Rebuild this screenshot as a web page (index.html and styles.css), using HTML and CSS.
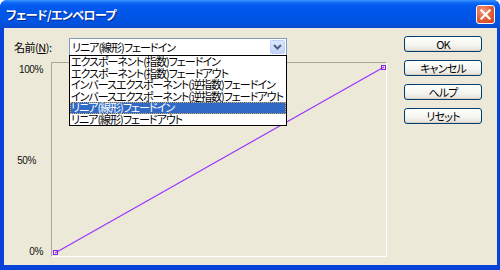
FILE: index.html
```html
<!DOCTYPE html>
<html lang="ja">
<head>
    <meta charset="UTF-8">
    <title>フェード/エンベロープ</title>
    <link rel="stylesheet" href="styles.css">
</head>
<body>
    <div class="window">
        <div class="titlebar">
            <span class="title">フェード/エンベロープ</span>
            <div class="close-btn">
                <svg width="17" height="17" viewBox="0 0 17 17">
                    <path d="M4.5 4.5 L12.5 12.5 M12.5 4.5 L4.5 12.5" stroke="#fff" stroke-width="2.2" stroke-linecap="square"/>
                </svg>
            </div>
        </div>

        <div class="client">
            <div class="main">
                <div class="name-row">
                    <span class="name-label">名前(<u>N</u>):</span>
                    <div class="combo">
                        <span class="combo-text">リニア(線形)フェードイン</span>
                        <span class="combo-arrow">
                            <svg width="9" height="6" viewBox="0 0 9 6">
                                <path d="M1 1 L4.5 4.5 L8 1" fill="none" stroke="#4d6185" stroke-width="2"/>
                            </svg>
                        </span>
                        <ul class="combo-list">
                            <li>エクスポーネント(指数)フェードイン</li>
                            <li>エクスポーネント(指数)フェードアウト</li>
                            <li>インバースエクスポーネント(逆指数)フェードイン</li>
                            <li>インバースエクスポーネント(逆指数)フェードアウト</li>
                            <li class="selected">リニア(線形)フェードイン</li>
                            <li>リニア(線形)フェードアウト</li>
                        </ul>
                    </div>
                </div>

                <div class="chart">
                    <div class="axis">
                        <span>100%</span>
                        <span class="mid">50%</span>
                        <span>0%</span>
                    </div>
                    <div class="plot">
                        <svg width="334" height="193" viewBox="0 0 334 193">
                            <line x1="3" y1="190" x2="332" y2="4" stroke="#9933ff" stroke-width="1.2"/>
                            <rect x="1.5" y="187.5" width="4" height="4" fill="none" stroke="#8a22ee"/>
                            <rect x="329.5" y="2.5" width="4" height="4" fill="none" stroke="#8a22ee"/>
                        </svg>
                    </div>
                </div>
            </div>

            <div class="buttons">
                <div class="btn">OK</div>
                <div class="btn">キャンセル</div>
                <div class="btn">ヘルプ</div>
                <div class="btn">リセット</div>
            </div>
        </div>
    </div>
</body>
</html>
```

FILE: styles.css
```css
* {
    margin: 0;
    padding: 0;
    box-sizing: border-box;
}

body {
    font-family: "Noto Sans CJK JP", "Liberation Sans", sans-serif;
    font-size: 11px;
    font-feature-settings: "palt";
    color: #000;
    background: #fff;
}

.window {
    width: 500px;
    height: 270px;
    display: flex;
    flex-direction: column;
    background: #0842d8;
    border-radius: 7px 7px 0 0;
    overflow: hidden;
}

.titlebar {
    height: 28px;
    flex-shrink: 0;
    display: flex;
    align-items: center;
    justify-content: space-between;
    padding: 0 5px 0 6px;
    background: linear-gradient(#3d95ff 0, #0a66f6 3px, #0058ee 7px, #0056e8 50%, #0052df 85%, #0a49cf 100%);
}

.title {
    color: #fff;
    font-weight: bold;
    font-size: 12px;
    letter-spacing: -0.6px;
    text-shadow: 1px 1px #0b2a8c;
    margin-top: 1px;
}

.close-btn {
    width: 19px;
    height: 19px;
    margin-top: 1px;
    border: 1px solid #fff;
    border-radius: 3px;
    background: radial-gradient(circle at 35% 30%, #f29a7c 0, #e2603a 50%, #c8401c 100%);
    display: flex;
    align-items: center;
    justify-content: center;
}

.close-btn svg {
    display: block;
}

.client {
    flex: 1;
    display: flex;
    margin: 0 3px 5px 4px;
    padding: 9px 15px 0 10px;
    background: #ece9d8;
}

.main {
    flex: 1;
    display: flex;
    flex-direction: column;
}

.name-row {
    display: flex;
    align-items: center;
    margin-top: 1px;
    height: 18px;
}

.name-label {
    width: 55px;
    letter-spacing: -0.5px;
}

.combo {
    position: relative;
    width: 218px;
    height: 18px;
    background: #fff;
    border: 1px solid #7f9db9;
    display: flex;
    align-items: center;
}

.combo-text {
    flex: 1;
    padding-left: 2px;
    letter-spacing: -1px;
    white-space: nowrap;
}

.combo-arrow {
    width: 15px;
    height: 14px;
    margin-right: 1px;
    border: 1px solid #bad1fc;
    border-radius: 2px;
    background: linear-gradient(#dde8fe, #c3d4fb);
    display: flex;
    align-items: center;
    justify-content: center;
}

.combo-list {
    position: absolute;
    left: -1px;
    top: 16px;
    width: 218px;
    list-style: none;
    background: #fff;
    border: 1px solid #000;
    z-index: 2;
}

.combo-list li {
    height: 11.5px;
    line-height: 11.5px;
    padding-left: 1px;
    letter-spacing: -1px;
    white-space: nowrap;
}

.combo-list li.selected {
    background: #316ac5;
    color: #fff;
    outline: 1px dotted #d6a85a;
    outline-offset: -1px;
}

.chart {
    display: flex;
    margin-top: 6px;
}

.axis {
    width: 37px;
    display: flex;
    flex-direction: column;
    justify-content: space-between;
    align-items: flex-end;
    padding: 2px 8px 0 0;
    font-family: "Liberation Sans", sans-serif;
    font-size: 10px;
    letter-spacing: -0.4px;
    color: #111;
}

.axis .mid {
    margin-right: 7px;
}

.plot {
    width: 336px;
    height: 195px;
    border-left: 1px solid #aca899;
    border-top: 1px solid #aca899;
    border-right: 1px solid #fff;
    border-bottom: 1px solid #fff;
}

.plot svg {
    display: block;
    overflow: visible;
}

.buttons {
    width: 78px;
    margin-top: -1px;
    display: flex;
    flex-direction: column;
    gap: 8px;
}

.btn {
    height: 16px;
    line-height: 14px;
    text-align: center;
    letter-spacing: -0.8px;
    border: 1px solid #003c74;
    border-radius: 3px;
    background: linear-gradient(#fff 0, #f4f3ee 60%, #e3e1d6 100%);
    box-shadow: inset 0 -1px #d6d0c5;
}
```
